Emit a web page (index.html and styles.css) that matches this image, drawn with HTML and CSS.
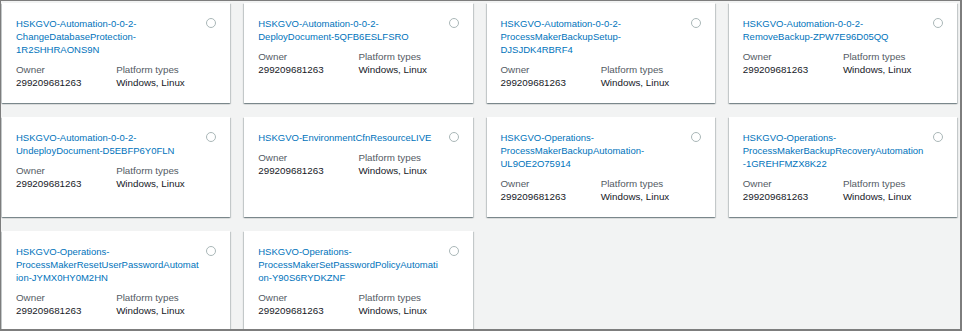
FILE: index.html
```html
<!DOCTYPE html>
<html lang="en">
<head>
    <meta charset="UTF-8">
    <title>Documents</title>
    <link rel="stylesheet" href="styles.css">
</head>
<body>
    <div class="frame">
        <div class="cards">
            <div class="card">
                <div class="card_head">
                    <a class="card_title" href="#">HSKGVO-Automation-0-0-2-ChangeDatabaseProtection-1R2SHHRAONS9N</a>
                    <span class="radio"></span>
                </div>
                <div class="props">
                    <div class="prop"><span class="label">Owner</span><span class="value">299209681263</span></div>
                    <div class="prop"><span class="label">Platform types</span><span class="value">Windows, Linux</span></div>
                </div>
            </div>
            <div class="card">
                <div class="card_head">
                    <a class="card_title" href="#">HSKGVO-Automation-0-0-2-DeployDocument-5QFB6ESLFSRO</a>
                    <span class="radio"></span>
                </div>
                <div class="props">
                    <div class="prop"><span class="label">Owner</span><span class="value">299209681263</span></div>
                    <div class="prop"><span class="label">Platform types</span><span class="value">Windows, Linux</span></div>
                </div>
            </div>
            <div class="card">
                <div class="card_head">
                    <a class="card_title" href="#">HSKGVO-Automation-0-0-2-ProcessMakerBackupSetup-DJSJDK4RBRF4</a>
                    <span class="radio"></span>
                </div>
                <div class="props">
                    <div class="prop"><span class="label">Owner</span><span class="value">299209681263</span></div>
                    <div class="prop"><span class="label">Platform types</span><span class="value">Windows, Linux</span></div>
                </div>
            </div>
            <div class="card">
                <div class="card_head">
                    <a class="card_title" href="#">HSKGVO-Automation-0-0-2-RemoveBackup-ZPW7E96D05QQ</a>
                    <span class="radio"></span>
                </div>
                <div class="props">
                    <div class="prop"><span class="label">Owner</span><span class="value">299209681263</span></div>
                    <div class="prop"><span class="label">Platform types</span><span class="value">Windows, Linux</span></div>
                </div>
            </div>
            <div class="card">
                <div class="card_head">
                    <a class="card_title" href="#">HSKGVO-Automation-0-0-2-UndeployDocument-D5EBFP6Y0FLN</a>
                    <span class="radio"></span>
                </div>
                <div class="props">
                    <div class="prop"><span class="label">Owner</span><span class="value">299209681263</span></div>
                    <div class="prop"><span class="label">Platform types</span><span class="value">Windows, Linux</span></div>
                </div>
            </div>
            <div class="card">
                <div class="card_head">
                    <a class="card_title" href="#">HSKGVO-EnvironmentCfnResourceLIVE</a>
                    <span class="radio"></span>
                </div>
                <div class="props">
                    <div class="prop"><span class="label">Owner</span><span class="value">299209681263</span></div>
                    <div class="prop"><span class="label">Platform types</span><span class="value">Windows, Linux</span></div>
                </div>
            </div>
            <div class="card">
                <div class="card_head">
                    <a class="card_title" href="#">HSKGVO-Operations-ProcessMakerBackupAutomation-UL9OE2O75914</a>
                    <span class="radio"></span>
                </div>
                <div class="props">
                    <div class="prop"><span class="label">Owner</span><span class="value">299209681263</span></div>
                    <div class="prop"><span class="label">Platform types</span><span class="value">Windows, Linux</span></div>
                </div>
            </div>
            <div class="card">
                <div class="card_head">
                    <a class="card_title" href="#">HSKGVO-Operations-ProcessMakerBackupRecoveryAutomation-1GREHFMZX8K22</a>
                    <span class="radio"></span>
                </div>
                <div class="props">
                    <div class="prop"><span class="label">Owner</span><span class="value">299209681263</span></div>
                    <div class="prop"><span class="label">Platform types</span><span class="value">Windows, Linux</span></div>
                </div>
            </div>
            <div class="card">
                <div class="card_head">
                    <a class="card_title" href="#">HSKGVO-Operations-ProcessMakerResetUserPasswordAutomation-JYMX0HY0M2HN</a>
                    <span class="radio"></span>
                </div>
                <div class="props">
                    <div class="prop"><span class="label">Owner</span><span class="value">299209681263</span></div>
                    <div class="prop"><span class="label">Platform types</span><span class="value">Windows, Linux</span></div>
                </div>
            </div>
            <div class="card">
                <div class="card_head">
                    <a class="card_title" href="#">HSKGVO-Operations-ProcessMakerSetPasswordPolicyAutomation-Y90S6RYDKZNF</a>
                    <span class="radio"></span>
                </div>
                <div class="props">
                    <div class="prop"><span class="label">Owner</span><span class="value">299209681263</span></div>
                    <div class="prop"><span class="label">Platform types</span><span class="value">Windows, Linux</span></div>
                </div>
            </div>
        </div>
    </div>
</body>
</html>
```

FILE: styles.css
```css
body {
    margin: 0;
    font-family: "Liberation Sans", Arial, sans-serif;
}
.frame {
    box-sizing: border-box;
    width: 962px;
    height: 331px;
    overflow: hidden;
    background-color: #f2f3f3;
    border-style: solid;
    border-color: #7d7d7d;
    border-width: 1px 2px 2px 1px;
    padding: 2px 3px 0 1px;
}
.cards {
    display: grid;
    grid-template-columns: repeat(4, 1fr);
    gap: 14px;
}
.card {
    background-color: #fff;
    padding: 14px;
    box-shadow: 0 1px 1px 0 rgba(0, 28, 36, .3), 1px 1px 1px 0 rgba(0, 28, 36, .15), -1px 1px 1px 0 rgba(0, 28, 36, .15);
}
.card .card_head {
    display: flex;
    align-items: flex-start;
    column-gap: 7px;
}
.card .card_title {
    flex: 1;
    min-width: 0;
    font-size: 9.5px;
    line-height: 13px;
    color: #0073bb;
    text-decoration: none;
    overflow-wrap: anywhere;
}
.card .radio {
    flex: none;
    box-sizing: border-box;
    width: 10px;
    height: 10px;
    margin-top: 1px;
    border: 1px solid #aab7b8;
    border-radius: 50%;
}
.card .props {
    display: grid;
    grid-template-columns: 1fr 1fr;
    margin-top: 7px;
}
.card .prop {
    display: flex;
    flex-direction: column;
    font-size: 9.8px;
    line-height: 13px;
}
.card .label {
    color: #545b64;
}
.card .value {
    color: #16191f;
}
```
